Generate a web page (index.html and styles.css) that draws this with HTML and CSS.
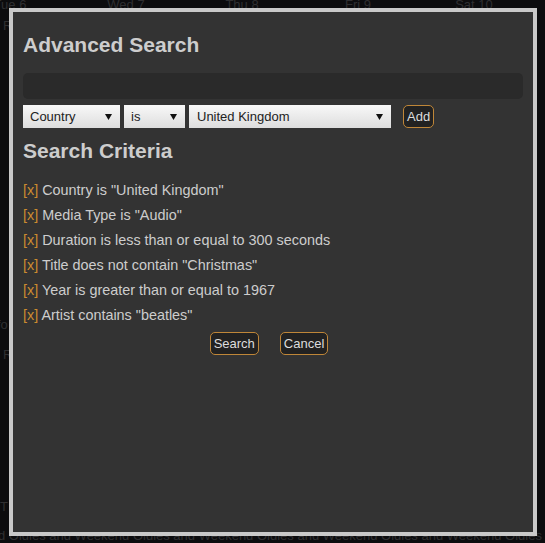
FILE: index.html
```html
<!DOCTYPE html>
<html lang="en">
<head>
<meta charset="utf-8">
<title>Advanced Search</title>
<link rel="stylesheet" href="styles.css">
</head>
<body>
<div class="bg">
  <div class="days">
    <div>Tue 6</div><div>Wed 7</div><div>Thu 8</div><div>Fri 9</div><div>Sat 10</div>
  </div>
  <div class="edge e1">R</div>
  <div class="edge e2">fo</div>
  <div class="edge e3">R</div>
  <div class="edge e4">T</div>
  <div class="foot">d Oldies and Weekend Oldies and Weekend Oldies and Weekend Oldies and Weekend Oldies and Weekend Oldies and Weekend</div>
</div>

<div class="modal">
  <h1 class="title">Advanced Search</h1>
  <div class="search-input"></div>
  <div class="criteria-row">
    <div class="select sel-field"><span>Country</span><svg class="arrow" width="7" height="6" viewBox="0 0 7 6"><path d="M0 0H7L3.5 6Z" fill="#111"/></svg></div>
    <div class="select sel-op"><span>is</span><svg class="arrow" width="7" height="6" viewBox="0 0 7 6"><path d="M0 0H7L3.5 6Z" fill="#111"/></svg></div>
    <div class="select sel-value"><span>United Kingdom</span><svg class="arrow" width="7" height="6" viewBox="0 0 7 6"><path d="M0 0H7L3.5 6Z" fill="#111"/></svg></div>
    <button class="btn btn-add">Add</button>
  </div>
  <h2 class="title sub">Search Criteria</h2>
  <ul class="criteria">
    <li><span class="remove">[x]</span> Country is "United Kingdom"</li>
    <li><span class="remove">[x]</span> Media Type is "Audio"</li>
    <li><span class="remove">[x]</span> Duration is less than or equal to 300 seconds</li>
    <li><span class="remove">[x]</span> Title does not contain "Christmas"</li>
    <li><span class="remove">[x]</span> Year is greater than or equal to 1967</li>
    <li><span class="remove">[x]</span> Artist contains "beatles"</li>
  </ul>
  <div class="actions">
    <button class="btn">Search</button>
    <button class="btn">Cancel</button>
  </div>
</div>
</body>
</html>
```

FILE: styles.css
```css
html, body {
  margin: 0;
  padding: 0;
}
body {
  width: 545px;
  height: 543px;
  overflow: hidden;
  background: #0c0c0e;
  font-family: "Liberation Sans", Arial, sans-serif;
  position: relative;
}

.bg {
  color: #2f2f31;
  font-size: 13px;
  line-height: 14px;
}
.days {
  display: grid;
  grid-template-columns: repeat(5, 116px);
  margin-left: -48px;
  margin-top: -2px;
  height: 14px;
  text-align: center;
  white-space: nowrap;
}
.edge {
  height: 14px;
  padding-left: 3px;
}
.e1 { margin-top: 7px; }
.e2 { margin-top: 285px; padding-left: 0; margin-left: -3px; }
.e3 { margin-top: 16px; }
.e4 { margin-top: 138px; padding-left: 0; }
.foot {
  margin-top: 15px;
  margin-left: -2px;
  white-space: nowrap;
}

.modal {
  position: absolute;
  left: 9px;
  top: 8px;
  width: 528px;
  height: 528px;
  box-sizing: border-box;
  border: 4px solid #c9c9c9;
  background: #333333;
  padding: 21px 10px 0 10px;
  color: #cfcfcf;
}

.title {
  margin: 0;
  font-size: 21px;
  line-height: 24px;
  font-weight: bold;
  color: #cdcdcd;
}

.search-input {
  margin-top: 16px;
  height: 26px;
  background: #2a2a2a;
  border-radius: 5px;
}

.criteria-row {
  margin-top: 6px;
  display: flex;
  gap: 4px;
  height: 23px;
}
.select {
  height: 23px;
  box-sizing: border-box;
  display: flex;
  align-items: center;
  justify-content: space-between;
  padding: 0 8px 0 7px;
  background: linear-gradient(#f8f8f8, #dddddd);
  color: #222;
  font-size: 13px;
}
.sel-field { width: 97px; }
.sel-op { width: 61px; }
.sel-value { width: 202px; padding-left: 8px; }
.arrow {
  display: block;
  margin-top: 1px;
}

.btn {
  height: 23px;
  box-sizing: border-box;
  padding: 0 3px;
  background: #222222;
  border: 1px solid #bf8638;
  border-radius: 5px;
  color: #dddddd;
  font-family: "Liberation Sans", Arial, sans-serif;
  font-size: 13px;
  line-height: 21px;
  cursor: pointer;
}
.btn-add {
  margin-left: 8px;
  width: 31px;
}

.sub {
  margin-top: 11px;
}

.criteria {
  list-style: none;
  margin: 15px 0 0 0;
  padding: 0;
  font-size: 14.4px;
  line-height: 25px;
  color: #cdcdcd;
}
.remove {
  color: #cc8b30;
}

.actions {
  margin-top: 4px;
  display: flex;
  justify-content: center;
  gap: 21px;
  padding-right: 8px;
}
```
